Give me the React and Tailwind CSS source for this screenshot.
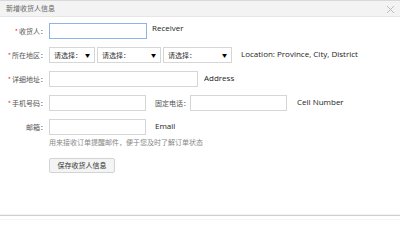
import React from 'react';

const cn = '"Noto Sans CJK SC", "Noto Sans", sans-serif';
const en = '"Open Sans", "Liberation Sans", sans-serif';

function Label({ text, required }) {
  return (
    <div className="w-[49px] shrink-0 pr-[2px] text-right text-[7px] text-[#555]" style={{ fontFamily: cn }}>
      {required && <span className="text-[#e4393c] mr-[1px]">*</span>}
      {text}：
    </div>
  );
}

function Note({ children, className = '' }) {
  return (
    <span className={`text-[8px] text-[#222] ${className}`} style={{ fontFamily: en }}>
      {children}
    </span>
  );
}

function Select({ width }) {
  return (
    <div
      className={`${width} h-[16px] border border-[#d6d6d6] bg-white flex items-center justify-between pl-[4px] pr-[4px] text-[7px] text-[#333]`}
      style={{ fontFamily: cn }}
    >
      <span>请选择：</span>
      <span className="text-[5px] text-black">▼</span>
    </div>
  );
}

export default function App() {
  return (
    <div className="w-[400px] h-[241px] bg-white overflow-hidden relative">
      {/* 标题栏 */}
      <div className="h-[17px] bg-[#f3f3f3] border-t border-[#d8d8d8] border-b border-b-[#e6e6e6] flex items-center justify-between pl-[6px] pr-[5px]">
        <span className="text-[7px] text-[#666]" style={{ fontFamily: cn }}>新增收货人信息</span>
        <svg width="9" height="9" viewBox="0 0 9 9" className="mt-[1px]">
          <path d="M1 1 L8 8 M8 1 L1 8" stroke="#b5b5b5" strokeWidth="0.9" />
        </svg>
      </div>

      <div className="h-[197px] pt-[6px] flex flex-col gap-[8px]">
        <div className="flex items-center h-[16px]">
          <Label text="收货人" required />
          <div className="w-[98px] h-[16px] border border-[#8fb4e3] bg-white" />
          <Note className="ml-[5px] -mt-[7px]">Receiver</Note>
        </div>

        <div className="flex items-center h-[16px]">
          <Label text="所在地区" required />
          <div className="flex gap-[2px]">
            <Select width="w-[46px]" />
            <Select width="w-[64px]" />
            <Select width="w-[69px]" />
          </div>
          <Note className="ml-[9px] -mt-[3px]">Location: Province, City, District</Note>
        </div>

        <div className="flex items-center h-[16px]">
          <Label text="详细地址" required />
          <div className="w-[149px] h-[16px] border border-[#d6d6d6] bg-white" />
          <Note className="ml-[6px] -mt-[2px]">Address</Note>
        </div>

        <div className="flex items-center h-[16px]">
          <Label text="手机号码" required />
          <div className="w-[97px] h-[16px] border border-[#d6d6d6] bg-white" />
          <span className="ml-[9px] w-[35px] text-[7px] text-[#555]" style={{ fontFamily: cn }}>固定电话：</span>
          <div className="w-[97px] h-[16px] border border-[#d6d6d6] bg-white" />
          <Note className="ml-[10px] -mt-[2px]">Cell Number</Note>
        </div>

        <div className="flex flex-col">
          <div className="flex items-center h-[16px]">
            <Label text="邮箱" />
            <div className="w-[97px] h-[16px] border border-[#d6d6d6] bg-white" />
            <Note className="ml-[9px] -mt-[2px]">Email</Note>
          </div>
          <div className="pl-[49px] mt-[2px] text-[7px] leading-[10px] text-[#888]" style={{ fontFamily: cn }}>
            用来接收订单提醒邮件，便于您及时了解订单状态
          </div>
          <div className="pl-[49px] mt-[11px]">
            <div
              className="w-[66px] h-[15px] border border-[#d3d3d3] rounded-[2px] bg-[#f4f4f4] flex items-center justify-center text-[7px] text-[#333]"
              style={{ fontFamily: cn }}
            >
              保存收货人信息
            </div>
          </div>
        </div>
      </div>

      {/* 底部分隔线 */}
      <div className="h-[1px] bg-[#f3f3f3]" />
      <div className="h-[1px] bg-[#cfcfcf]" />
      <div className="h-[3px]" />
      <div className="h-[1px] bg-[#f5f5f5]" />
    </div>
  );
}
